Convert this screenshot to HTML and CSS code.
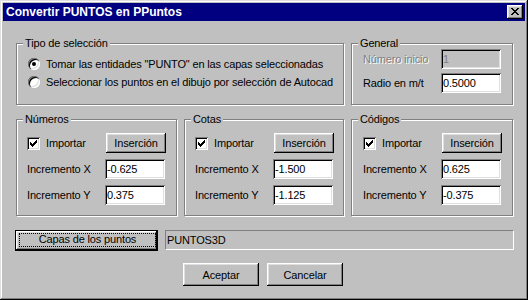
FILE: index.html
```html
<!DOCTYPE html>
<html lang="es">
<head>
    <meta charset="UTF-8">
    <title>Convertir PUNTOS en PPuntos</title>
    <link rel="stylesheet" href="styles.css">
</head>
<body>
    <div class="window">
        <div class="titlebar">
            <span class="title">Convertir PUNTOS en PPuntos</span>
            <span class="close">
                <svg width="8" height="7" viewBox="0 0 8 7" shape-rendering="crispEdges"><path d="M0 0h2v1H0z M6 0h2v1H6z M1 1h2v1H1z M5 1h2v1H5z M2 2h4v1H2z M3 3h2v1H3z M2 4h4v1H2z M1 5h2v1H1z M5 5h2v1H5z M0 6h2v1H0z M6 6h2v1H6z" fill="#000"/></svg>
            </span>
        </div>

        <div class="content">
            <div class="row row-top">
                <div class="group group-sel">
                    <span class="legend">Tipo de selección</span>
                    <div class="radio-row"><span class="radio checked"></span>Tomar las entidades "PUNTO" en las capas seleccionadas</div>
                    <div class="radio-row"><span class="radio"></span>Seleccionar los puntos en el dibujo por selección de Autocad</div>
                </div>
                <div class="group group-general">
                    <span class="legend">General</span>
                    <div class="grid grid-general">
                        <span class="lbl disabled">Número inicio</span>
                        <input type="text" class="field" value="1" disabled>
                        <span class="lbl">Radio en m/t</span>
                        <input type="text" class="field" value="0.5000">
                    </div>
                </div>
            </div>

            <div class="row row-mid">
                <div class="group group-num">
                    <span class="legend">Números</span>
                    <div class="grid">
                        <span class="check-row"><span class="check"><svg width="7" height="7" viewBox="0 0 7 7" shape-rendering="crispEdges"><path d="M6 0h1v1H6z M5 1h2v1H5z M0 2h1v1H0z M4 2h3v1H4z M0 3h2v1H0z M3 3h3v1H3z M0 4h5v1H0z M1 5h3v1H1z M2 6h1v1H2z" fill="#000"/></svg></span>Importar</span>
                        <button class="btn btn-small">Inserción</button>
                        <span class="lbl">Incremento X</span>
                        <input type="text" class="field" value="-0.625">
                        <span class="lbl">Incremento Y</span>
                        <input type="text" class="field" value="0.375">
                    </div>
                </div>
                <div class="group group-cot">
                    <span class="legend">Cotas</span>
                    <div class="grid">
                        <span class="check-row"><span class="check"><svg width="7" height="7" viewBox="0 0 7 7" shape-rendering="crispEdges"><path d="M6 0h1v1H6z M5 1h2v1H5z M0 2h1v1H0z M4 2h3v1H4z M0 3h2v1H0z M3 3h3v1H3z M0 4h5v1H0z M1 5h3v1H1z M2 6h1v1H2z" fill="#000"/></svg></span>Importar</span>
                        <button class="btn btn-small">Inserción</button>
                        <span class="lbl">Incremento X</span>
                        <input type="text" class="field" value="-1.500">
                        <span class="lbl">Incremento Y</span>
                        <input type="text" class="field" value="-1.125">
                    </div>
                </div>
                <div class="group group-cod">
                    <span class="legend">Códigos</span>
                    <div class="grid">
                        <span class="check-row"><span class="check"><svg width="7" height="7" viewBox="0 0 7 7" shape-rendering="crispEdges"><path d="M6 0h1v1H6z M5 1h2v1H5z M0 2h1v1H0z M4 2h3v1H4z M0 3h2v1H0z M3 3h3v1H3z M0 4h5v1H0z M1 5h3v1H1z M2 6h1v1H2z" fill="#000"/></svg></span>Importar</span>
                        <button class="btn btn-small">Inserción</button>
                        <span class="lbl">Incremento X</span>
                        <input type="text" class="field" value="0.625">
                        <span class="lbl">Incremento Y</span>
                        <input type="text" class="field" value="-0.375">
                    </div>
                </div>
            </div>

            <div class="row row-layer">
                <button class="btn btn-default"><span class="focus">Capas de los puntos</span></button>
                <div class="static">PUNTOS3D</div>
            </div>

            <div class="row row-actions">
                <button class="btn btn-action">Aceptar</button>
                <button class="btn btn-action">Cancelar</button>
            </div>
        </div>
    </div>
</body>
</html>
```

FILE: styles.css
```css
body {
    margin: 0;
    font-family: "Liberation Sans", Arial, sans-serif;
    font-size: 11px;
    letter-spacing: -0.15px;
    color: #000;
}

.window {
    width: 528px;
    height: 300px;
    box-sizing: border-box;
    padding: 3px;
    background-color: #c0c0c0;
    box-shadow: inset -1px -1px #000, inset 1px 1px #dfdfdf, inset -2px -2px #808080, inset 2px 2px #fff;
}

.titlebar {
    height: 18px;
    background-color: #000080;
    color: #fff;
    display: flex;
    align-items: center;
    justify-content: space-between;
    padding: 0 2px 0 3px;
}

.title {
    font-weight: bold;
    font-size: 12px;
    letter-spacing: 0;
}

.close {
    width: 16px;
    height: 14px;
    box-sizing: border-box;
    padding: 3px 0 0 4px;
    background-color: #c0c0c0;
    box-shadow: inset -1px -1px #000, inset 1px 1px #fff, inset -2px -2px #808080, inset 2px 2px #dfdfdf;
}

.close svg {
    display: block;
}

.content {
    padding: 22px 0 0 13px;
}

.row {
    display: flex;
}

.row-top {
    gap: 7px;
}

.row-mid {
    margin-top: 14px;
    gap: 7px;
}

.group {
    position: relative;
    box-sizing: border-box;
    border: 1px solid #808080;
    box-shadow: inset 1px 1px #fff, 1px 1px #fff;
}

.legend {
    position: absolute;
    top: -7px;
    left: 6px;
    padding: 0 2px;
    line-height: 13px;
    background-color: #c0c0c0;
}

.group-sel {
    width: 328px;
    height: 62px;
    padding: 11px 0 0 11px;
}

.group-general {
    width: 162px;
    height: 62px;
    padding: 5px 0 0 11px;
}

.radio-row {
    height: 18px;
    display: flex;
    align-items: center;
}

.radio {
    position: relative;
    width: 12px;
    height: 12px;
    margin-right: 6px;
    border-radius: 50%;
    background-color: #fff;
    box-shadow: inset 1px 1px #808080, inset 2px 2px #000, inset -1px -1px #fff, inset -2px -2px #dfdfdf;
}

.radio.checked::after {
    content: "";
    position: absolute;
    left: 4px;
    top: 4px;
    width: 4px;
    height: 4px;
    border-radius: 50%;
    background-color: #000;
}

.grid {
    display: grid;
    grid-template-columns: 78px 60px;
    grid-auto-rows: 20px;
    row-gap: 6px;
    align-items: center;
}

.grid-general {
    row-gap: 4px;
}

.group-num {
    width: 161px;
    height: 97px;
    padding: 13px 0 0 10px;
}

.group-cot {
    width: 160px;
    height: 97px;
    padding: 13px 0 0 10px;
}

.group-cod {
    width: 162px;
    height: 97px;
    padding: 13px 0 0 11px;
}

.lbl.disabled {
    color: #808080;
    text-shadow: 1px 1px 0 #fff;
}

.field {
    width: 60px;
    height: 20px;
    box-sizing: border-box;
    margin: 0;
    padding: 0 0 0 2px;
    border: none;
    outline: none;
    font: inherit;
    letter-spacing: inherit;
    color: #000;
    background-color: #fff;
    box-shadow: inset 1px 1px #808080, inset -1px -1px #fff, inset 2px 2px #000, inset -2px -2px #dfdfdf;
}

.field:disabled {
    background-color: #c0c0c0;
    color: #808080;
}

.check-row {
    display: flex;
    align-items: center;
}

.check {
    width: 13px;
    height: 13px;
    box-sizing: border-box;
    padding: 3px;
    margin-right: 6px;
    background-color: #fff;
    box-shadow: inset 1px 1px #808080, inset -1px -1px #fff, inset 2px 2px #000, inset -2px -2px #dfdfdf;
}

.check svg {
    display: block;
}

.btn {
    margin: 0;
    padding: 0;
    border: none;
    font: inherit;
    letter-spacing: inherit;
    color: #000;
    background-color: #c0c0c0;
    box-shadow: inset -1px -1px #000, inset 1px 1px #fff, inset -2px -2px #808080, inset 2px 2px #dfdfdf;
}

.btn-small {
    width: 60px;
    height: 20px;
    margin-left: 1px;
}

.row-layer {
    margin-top: 14px;
}

.btn-default {
    width: 143px;
    height: 21px;
    margin-left: -1px;
    box-sizing: border-box;
    border: 1px solid #000;
    padding: 2px 1px 3px 3px;
    display: flex;
}

.focus {
    flex: 1;
    border: 1px dotted #000;
    line-height: 11px;
}

.static {
    width: 349px;
    height: 20px;
    box-sizing: border-box;
    margin-left: 7px;
    padding-left: 1px;
    border: 1px solid;
    border-color: #808080 #fff #fff #808080;
    line-height: 18px;
}

.row-actions {
    margin-top: 12px;
    padding-left: 167px;
    gap: 8px;
}

.btn-action {
    width: 76px;
    height: 23px;
}
```
